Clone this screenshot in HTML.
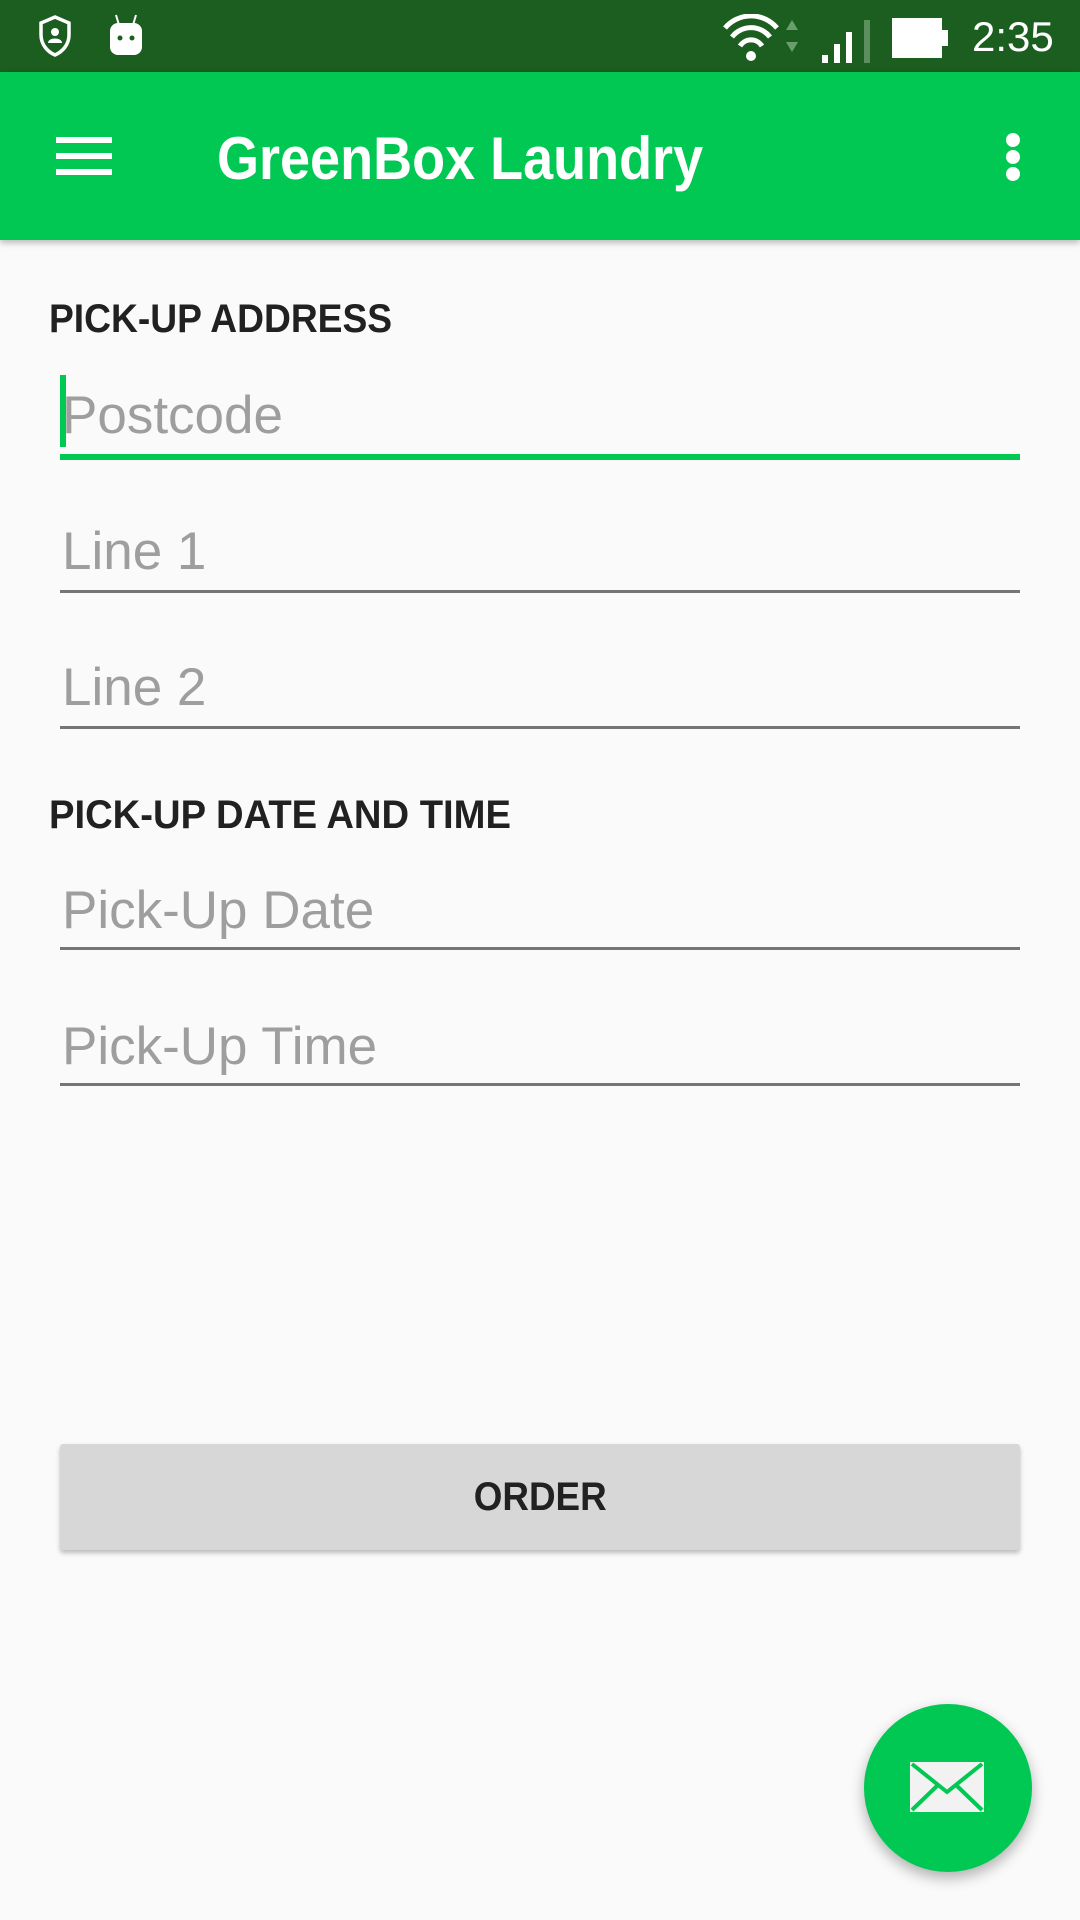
<!DOCTYPE html>
<html><head><meta charset="utf-8"><style>
*{margin:0;padding:0;box-sizing:border-box}
body{width:1080px;height:1920px;background:#fafafa;position:relative;overflow:hidden;font-family:"Liberation Sans",sans-serif}
.abs{position:absolute}
.sb{left:0;top:0;width:1080px;height:72px;background:#1b5e20}
.ab{left:0;top:72px;width:1080px;height:168px;background:#00c853;box-shadow:0 3px 6px rgba(0,0,0,.25)}
.hdr{left:49px;font-size:40px;font-weight:bold;color:#212121;white-space:nowrap;line-height:1}
.ph{left:62px;font-size:53px;color:#9e9e9e;line-height:1;white-space:nowrap}
.ul{left:60px;width:960px;height:3px;background:#757575}
</style></head><body>
<div class="abs sb"></div>
<svg class="abs" style="left:38px;top:15px" width="34" height="42" viewBox="0 0 34 42"><path d="M17 2 L31 8 V20 C31 30 24 37 17 40 C10 37 3 30 3 20 V8 Z" fill="none" stroke="#fff" stroke-width="3.5"/><circle cx="17" cy="17" r="4" fill="#fff"/><path d="M10 28 C10 22 24 22 24 28 Z" fill="#fff"/></svg>
<svg class="abs" style="left:108px;top:13px" width="36" height="44" viewBox="0 0 36 44"><path d="M8 2 L11 12 M28 2 L25 12" stroke="#fff" stroke-width="2"/><rect x="2" y="10" width="32" height="32" rx="8" fill="#fff"/><circle cx="12" cy="25" r="2.5" fill="#1b5e20"/><circle cx="24" cy="25" r="2.5" fill="#1b5e20"/></svg>
<svg class="abs" style="left:722px;top:14px" width="82" height="50" viewBox="0 0 82 50"><path d="M3 14 A34 34 0 0 1 55 14" fill="none" stroke="#fff" stroke-width="5"/><path d="M10 23 A24 24 0 0 1 48 23" fill="none" stroke="#fff" stroke-width="5"/><path d="M18 32 A13 13 0 0 1 40 32" fill="none" stroke="#fff" stroke-width="5"/><circle cx="29" cy="42" r="5" fill="#fff"/><path d="M64 16 L70 6 L76 16Z M64 28 L70 38 L76 28Z" fill="#6a9e6c"/></svg>
<div class="abs" style="left:822px;top:55px;width:6px;height:8px;background:#fff"></div>
<div class="abs" style="left:834px;top:44px;width:6px;height:19px;background:#fff"></div>
<div class="abs" style="left:846px;top:32px;width:6px;height:31px;background:#fff"></div>
<div class="abs" style="left:864px;top:20px;width:6px;height:43px;background:#5c8f5e"></div>
<div class="abs" style="left:892px;top:18px;width:50px;height:40px;background:#fff"></div>
<div class="abs" style="left:942px;top:30px;width:6px;height:16px;background:#fff"></div>
<div class="abs" style="left:972px;top:16px;font-size:42px;color:#fff;line-height:1">2:35</div>
<div class="abs ab"></div>
<div class="abs" style="left:56px;top:137px;width:56px;height:6px;background:#fff"></div>
<div class="abs" style="left:56px;top:153px;width:56px;height:6px;background:#fff"></div>
<div class="abs" style="left:56px;top:169px;width:56px;height:6px;background:#fff"></div>
<div class="abs" style="left:217px;top:129px;font-size:60px;font-weight:bold;color:#fff;line-height:1;white-space:nowrap;transform:scaleX(.9);transform-origin:left">GreenBox Laundry</div>
<div class="abs" style="left:1006px;top:133px;width:14px;height:14px;border-radius:50%;background:#fff"></div>
<div class="abs" style="left:1006px;top:150px;width:14px;height:14px;border-radius:50%;background:#fff"></div>
<div class="abs" style="left:1006px;top:167px;width:14px;height:14px;border-radius:50%;background:#fff"></div>

<div class="abs hdr" style="top:299px;transform:scaleX(.93);transform-origin:left">PICK-UP ADDRESS</div>
<div class="abs" style="left:60px;top:375px;width:6px;height:72px;background:#00c853"></div>
<div class="abs ph" style="top:389px">Postcode</div>
<div class="abs" style="left:60px;top:454px;width:960px;height:6px;background:#00c853"></div>
<div class="abs ph" style="top:525px">Line 1</div>
<div class="abs ul" style="top:590px"></div>
<div class="abs ph" style="top:661px">Line 2</div>
<div class="abs ul" style="top:726px"></div>

<div class="abs hdr" style="top:795px;transform:scaleX(.955);transform-origin:left">PICK-UP DATE AND TIME</div>
<div class="abs ph" style="top:884px">Pick-Up Date</div>
<div class="abs ul" style="top:947px"></div>
<div class="abs ph" style="top:1020px">Pick-Up Time</div>
<div class="abs ul" style="top:1083px"></div>

<div class="abs" style="left:60px;top:1444px;width:960px;height:106px;background:#d6d7d6;border-radius:3px;box-shadow:0 3px 5px rgba(0,0,0,.25);display:flex;align-items:center;justify-content:center;font-size:40px;font-weight:bold;color:#212121"><span style="display:inline-block;transform:scaleX(.92)">ORDER</span></div>

<div class="abs" style="left:864px;top:1704px;width:168px;height:168px;border-radius:50%;background:#00c853;box-shadow:0 6px 14px rgba(0,0,0,.3)"></div>
<svg class="abs" style="left:910px;top:1762px" width="74" height="50" viewBox="0 0 74 50"><rect x="0" y="0" width="74" height="50" fill="#f2f2f2"/><path d="M2 2 L37 30 L72 2 M2 48 L28 23 M72 48 L46 23" fill="none" stroke="#00c853" stroke-width="4"/></svg>
</body></html>
